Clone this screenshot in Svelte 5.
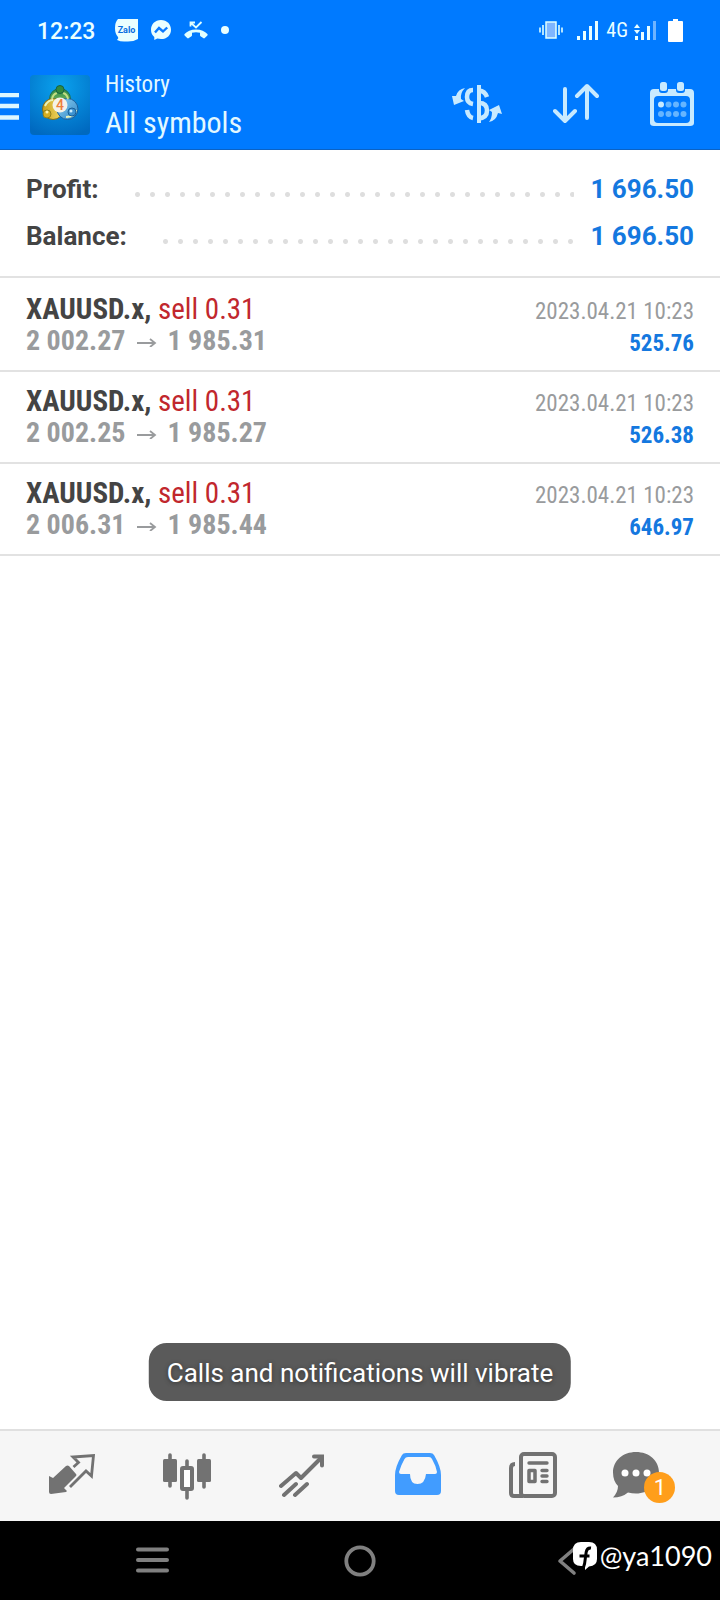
<script lang="ts">
	const summary = [
		{ label: 'Profit:', value: '1 696.50' },
		{ label: 'Balance:', value: '1 696.50' }
	];

	const deals = [
		{ open: '2 002.27', close: '1 985.31', profit: '525.76' },
		{ open: '2 002.25', close: '1 985.27', profit: '526.38' },
		{ open: '2 006.31', close: '1 985.44', profit: '646.97' }
	];

	let tab = 'history';
	let toast = 'Calls and notifications will vibrate';
</script>

<div class="screen">
	<div class="status-bar">
		<span class="clock">12:23</span>
		<svg class="zalo" width="23" height="23" viewBox="0 0 23 23">
			<path d="M3 0H23V20Q18 23 11 22.500Q6 23 2 21Q4 19 3 18Q0 15 0 9Q0 3 3 0Z" fill="#eaffff" />
			<text x="11.500" y="14" text-anchor="middle" class="zalo-text">Zalo</text>
		</svg>
		<svg class="messenger" width="20" height="21" viewBox="0 0 20 21">
			<path d="M10 0C4 0 0 4.300 0 9.700c0 3 1.200 5.600 3.300 7.300V20l3-1.400c1.200.3 2.400.5 3.700.5 6 0 10-4.100 10-9.400S16 0 10 0Z" fill="#eaffff" />
			<path d="M4 12.500 8 8l4 3.500 4.200-4" fill="none" stroke="#0a7aff" stroke-width="2.400" />
		</svg>
		<svg class="missed" width="24" height="18" viewBox="0 0 24 18">
			<path d="M12 8.500C7 8.500 3 10.500.6 13q-.6.800 0 1.600l2.600 2.500q.8.600 1.600 0l2.700-1.900q.6-.5.500-1.200V11.800q4-1.200 8 0V14q0 .7.500 1.200l2.700 1.900q.8.600 1.600 0l2.600-2.500q.6-.8 0-1.600C21 10.500 17 8.500 12 8.500Z" fill="#e0ffff" />
			<path d="M6.500 5.500V1.500H11M7 2l5 4.500 5.500-5.500" fill="none" stroke="#e0ffff" stroke-width="1.800" />
		</svg>
		<span class="dot"></span>

		<svg class="vibrate" width="24" height="18" viewBox="0 0 24 18">
			<rect x="7" y="1" width="10" height="16" fill="#7fb6ff" stroke="#e0ffff" stroke-width="1.500" />
			<path d="M1 6.500v5M4 4v10M20 4v10M23 6.500v5" stroke="#e0ffff" stroke-width="1.600" />
		</svg>
		<svg class="signal" width="22" height="20" viewBox="0 0 22 20">
			<path d="M0 16h3v4H0ZM6 11h3v9H6ZM12 6h3v14h-3ZM18 1h3v19h-3Z" fill="#eaffff" />
		</svg>
		<span class="network">4G</span>
		<svg class="signal" width="22" height="20" viewBox="0 0 22 20">
			<path d="M1 16h3v4H1ZM7 12h3v8H7ZM13 6h3v14h-3ZM0 8l3-4 3 4ZM0 10h6l-3 4Z" fill="#eaffff" />
			<path d="M19 1h3v19h-3Z" fill="#6fb4ff" />
		</svg>
		<svg class="battery" width="15" height="23" viewBox="0 0 15 23">
			<path d="M5 0h5v2h4q1 0 1 1v19q0 1-1 1H1q-1 0-1-1V3q0-1 1-1h4Z" fill="#fff" />
		</svg>
	</div>

	<header>
		<button class="menu" aria-label="Menu">
			<svg width="19" height="27" viewBox="0 0 19 27">
				<path d="M0 2h19M0 13h19M0 24.500h19" stroke="#dcf6ff" stroke-width="4.400" />
			</svg>
		</button>
		<svg class="app-icon" width="60" height="60" viewBox="0 0 60 60">
			<defs>
				<radialGradient id="tile" cx="50%" cy="20%" r="85%">
					<stop offset="0" stop-color="#0aa2ee" />
					<stop offset="1" stop-color="#0069c0" />
				</radialGradient>
				<linearGradient id="green" x2="0" y2="1">
					<stop offset="0" stop-color="#27894a" />
					<stop offset="1" stop-color="#9ccb62" />
				</linearGradient>
				<linearGradient id="gold" x2="1" y2="0">
					<stop offset="0" stop-color="#c9a21b" />
					<stop offset="1" stop-color="#f2dc6a" />
				</linearGradient>
				<linearGradient id="sky" x2="1" y2="1">
					<stop offset="0" stop-color="#91d1f2" />
					<stop offset="1" stop-color="#2d86c7" />
				</linearGradient>
			</defs>
			<rect width="60" height="60" rx="4" fill="url(#tile)" />
			<circle cx="30" cy="24" r="10.500" fill="url(#green)" stroke="#1f6d49" />
			<circle cx="23" cy="34" r="10.500" fill="url(#gold)" stroke="#786d24" />
			<circle cx="37.500" cy="34" r="10.500" fill="url(#sky)" stroke="#1b609c" />
			<path d="M22 24q1-5 5-6M38 24q-1-5-5-6" fill="none" stroke="#c3df83" stroke-width="2" />
			<path d="M15 31q3-6 8-6M36 42q9 0 10-7" fill="none" stroke="#e8f2ba" stroke-width="2" />
			<circle cx="30" cy="14.500" r="4" fill="#338b3d" stroke="#176144" />
			<circle cx="17" cy="39" r="4" fill="#d5ae22" stroke="#8f801e" />
			<circle cx="42" cy="37" r="4" fill="#3d92d1" stroke="#185f98" />
			<circle cx="41" cy="36" r="1.500" fill="#cdefff" />
			<circle cx="17" cy="37" r="1.500" fill="#fff4ad" />
			<circle cx="30" cy="30" r="7.500" fill="#f5f2e8" />
			<text x="30" y="35" text-anchor="middle" class="app-digit">4</text>
		</svg>
		<div class="titles">
			<span class="subtitle">History</span>
			<h1>All symbols</h1>
		</div>
		<div class="actions">
			<button aria-label="Symbols">
				<svg width="50" height="40" viewBox="0 0 50 40" fill="none" stroke="#c8eaff">
					<path d="M27 1v38" stroke-width="4" />
					<path d="M21 6q-6 0-6 7 0 6 6 7" stroke-width="4.500" />
					<path d="M15 26q1 7 6 8" stroke-width="4.500" />
					<path d="M27 6.500q6 .5 8 6.500M27 19q8 0 8 7.500 0 7-8 8" stroke-width="4.500" />
					<path d="M13 4Q6 5 4 12L0 12l2 9 10-4-3-2q-1-6 4-11ZM37 38q7-1 9-9l4 1-3-9-10 5 3 2q0 6-3 10Z" fill="#c8eaff" stroke="none" />
				</svg>
			</button>
			<button aria-label="Sort">
				<svg width="46" height="42" viewBox="0 0 46 42" fill="none" stroke="#c8eaff" stroke-width="4" stroke-linecap="round" stroke-linejoin="round">
					<path d="M12 6v32M2 28l10 10 10-10M34 35V4M24 13 34 3l10 10" />
				</svg>
			</button>
			<button aria-label="Period">
				<svg width="44" height="46" viewBox="0 0 44 46">
					<path fill-rule="evenodd" d="M4 8H9v1q0 3 3 3h3q3 0 3-3V8h8v1q0 3 3 3h3q3 0 3-3V8h5q4 0 4 4v30q0 3-4 3H4q-4 0-4-3V12Q0 8 4 8ZM8 15q-4 0-4 4v19q0 4 4 4h28q4 0 4-4V19q0-4-4-4Z" fill="#c8eaff" />
					<rect x="10" y="1" width="7" height="9" rx="2.500" fill="#c8eaff" />
					<rect x="27" y="1" width="7" height="9" rx="2.500" fill="#c8eaff" />
					<circle cx="11" cy="23.500" r="3" fill="#c8eaff" />
					<g fill="#66b5ff">
						<circle cx="18.500" cy="23.500" r="3" />
						<circle cx="26" cy="23.500" r="3" />
						<circle cx="33.500" cy="23.500" r="3" />
						<circle cx="11" cy="33" r="3" />
						<circle cx="18.500" cy="33" r="3" />
						<circle cx="26" cy="33" r="3" />
						<circle cx="33.500" cy="33" r="3" />
					</g>
				</svg>
			</button>
		</div>
	</header>

	<main>
		<dl class="summary">
			{#each summary as line}
				<div class="summary-line">
					<dt>{line.label}</dt>
					<span class="leader"></span>
					<dd>{line.value}</dd>
				</div>
			{/each}
		</dl>

		<ul class="deals">
			{#each deals as deal}
				<li>
					<div class="deal-info">
						<span class="symbol">XAUUSD.x, <span class="side">sell 0.31</span></span>
						<span class="prices">
							<span>{deal.open}</span>
							<svg width="20" height="12" viewBox="0 0 20 12">
								<path d="M0 8h18M13 4l5 4-5 4" fill="none" stroke="#999b9d" stroke-width="1.800" />
							</svg>
							<span>{deal.close}</span>
						</span>
					</div>
					<div class="deal-result">
						<time>2023.04.21 10:23</time>
						<span class="profit">{deal.profit}</span>
					</div>
				</li>
			{/each}
		</ul>

		{#if toast}
			<div class="toast" role="status">{toast}</div>
		{/if}
	</main>

	<nav class="tabs">
		<button aria-label="Quotes" on:click={() => (tab = 'quotes')}>
			<svg width="46" height="46" viewBox="0 0 46 46">
				<path d="M0 23l4 2L17 13q1.500-1 3 0l7 8q1 1 0 2L15 35l3 3-1 1-15 2q-2 0-2-2Z" fill="#727272" />
				<path d="M21 34 37 18l5.500 5L44.500 2.500 24 4l5.500 5.500L24.500 14" fill="none" stroke="#727272" stroke-width="2.800" />
			</svg>
		</button>
		<button aria-label="Chart" on:click={() => (tab = 'chart')}>
			<svg width="48" height="48" viewBox="0 0 48 48">
				<path d="M7 3v31M41 3v32M24 9v7M24 38v8" stroke="#727272" stroke-width="3.600" stroke-linecap="round" />
				<rect x="0" y="7" width="14" height="23" rx="1.500" fill="#727272" />
				<rect x="34" y="7" width="14" height="23" rx="1.500" fill="#727272" />
				<rect x="19" y="16" width="10" height="21" rx="1" fill="#fff" stroke="#727272" stroke-width="4" />
			</svg>
		</button>
		<button aria-label="Trade" on:click={() => (tab = 'trade')}>
			<svg width="46" height="46" viewBox="0 0 46 46" fill="none" stroke="#727272" stroke-width="4" stroke-linecap="round">
				<path d="M2 33 17 20l5 5L42 5M5 42l12-11M16 42l12-11" stroke-linejoin="round" />
				<path d="M35 3.500h8v9" />
			</svg>
		</button>
		<button aria-label="History" aria-current={tab === 'history'} on:click={() => (tab = 'history')}>
			<svg width="46" height="46" viewBox="0 0 46 46">
				<path d="M11 0H35q3 0 4 2Q46 14 46 22V38q0 4-4 4H4q-4 0-4-4V22Q0 14 7 2 8 0 11 0Z" fill="#419cff" />
				<path d="M13 4H34q2 0 3 2 4 7 5 13 0 2-2 2H31q-1 10-8.500 10T15 21H6q-2 0-2-2Q6 12 9.500 6q1-2 3.500-2Z" fill="#f7f7f7" />
			</svg>
		</button>
		<button aria-label="News" on:click={() => (tab = 'news')}>
			<svg width="48" height="48" viewBox="0 0 48 48" fill="none" stroke="#727272" stroke-width="4">
				<rect x="12" y="2" width="34" height="42" rx="3" />
				<path d="M6 12q-4 0-4 4V41q0 3 3 3H14" />
				<path d="M20 11h18M33 18.500h5M33 24h5M33 29.500h5" stroke-width="3.400" stroke-linecap="round" />
				<rect x="20" y="18.500" width="6" height="11" stroke-width="3.500" stroke-linejoin="round" />
			</svg>
		</button>
		<button aria-label="Messages" on:click={() => (tab = 'messages')}>
			<span class="bubble">
				<svg width="46" height="48" viewBox="0 0 46 48">
					<path d="M23 0C10 0 0 8.500 0 20.500c0 6 2 10.500 5 13.500q0 6-5 11.500 9 0 15-5 4 1 8 1c13 0 23-9 23-21S36 0 23 0Z" fill="#727272" />
					<circle cx="12" cy="21" r="3.500" fill="#fff" />
					<circle cx="23" cy="21" r="3.500" fill="#fff" />
					<circle cx="34" cy="21" r="3.500" fill="#fff" />
				</svg>
				<span class="badge">1</span>
			</span>
		</button>
	</nav>

	<div class="system-nav">
		<button aria-label="Recent apps">
			<svg width="33" height="27" viewBox="0 0 33 27">
				<path d="M2 2.500h29M2 13h29M2 23.500h29" stroke="#808080" stroke-width="4" stroke-linecap="round" />
			</svg>
		</button>
		<button aria-label="Home">
			<svg width="32" height="32" viewBox="0 0 32 32">
				<circle cx="16" cy="16" r="13.700" fill="none" stroke="#808080" stroke-width="3.800" />
			</svg>
		</button>
		<button aria-label="Back">
			<svg width="20" height="30" viewBox="0 0 20 30">
				<path d="M17 3 3 15l14 12" fill="none" stroke="#808080" stroke-width="3.600" stroke-linecap="round" stroke-linejoin="round" />
			</svg>
		</button>
		<div class="watermark">
			<svg width="24" height="28" viewBox="0 0 24 28">
				<path d="M8 0h8q8 0 8 8v9q0 7-8 7.500L12 28V24H8q-8 0-8-7V8Q0 0 8 0Z" fill="#fff" />
				<path d="M10 27q2-5 2.500-12L13.200 10q.8-4.500 4.800-4M6.500 14h10" fill="none" stroke="#000" stroke-width="3" />
			</svg>
			<span>@ya1090</span>
		</div>
	</div>
</div>

<style>
	:global(body) {
		margin: 0;
		background: #fff;
	}

	.screen {
		display: flex;
		flex-direction: column;
		min-height: 100vh;
		font-family: Roboto, 'Liberation Sans', sans-serif;
	}

	svg {
		display: block;
		flex: none;
	}

	button {
		display: flex;
		align-items: center;
		justify-content: center;
		padding: 0;
		border: none;
		background: none;
		cursor: pointer;
	}

	.status-bar {
		display: flex;
		align-items: center;
		height: 60px;
		padding: 0 37px;
		background: #007aff;
		color: #eaffff;
	}

	.clock {
		padding-top: 3px;
		font-size: 23px;
		font-weight: 500;
		line-height: 28px;
	}

	.zalo {
		margin-left: 20px;
	}

	.zalo-text {
		font-size: 9px;
		font-weight: 700;
		fill: #0a6ee0;
	}

	.messenger,
	.missed,
	.dot {
		margin-left: 13px;
	}

	.dot {
		width: 8px;
		height: 8px;
		border-radius: 50%;
		background: #eaffff;
	}

	.vibrate {
		margin-left: auto;
	}

	.signal {
		margin-left: 14px;
	}

	.network {
		margin-left: 7px;
		font-family: 'Roboto Condensed', Roboto, sans-serif;
		font-size: 20px;
	}

	.network + .signal {
		margin-left: 6px;
	}

	.battery {
		margin-left: 12px;
	}

	header {
		display: flex;
		align-items: center;
		height: 89px;
		border-bottom: 1px solid #0b62c4;
		background: #007aff;
		color: #e2f8ff;
	}

	.menu {
		padding-top: 4px;
	}

	.app-icon {
		margin-left: 11px;
	}

	.app-digit {
		font-size: 14px;
		font-weight: 500;
		fill: #ee7f3c;
	}

	.titles {
		display: flex;
		flex-direction: column;
		margin-left: 15px;
		font-family: 'Roboto Condensed', Roboto, sans-serif;
	}

	.subtitle {
		font-size: 23px;
		line-height: 36px;
	}

	h1 {
		margin: 0;
		font-size: 30px;
		font-weight: 400;
		line-height: 40px;
	}

	.actions {
		display: flex;
		align-items: center;
		gap: 51px;
		margin-left: auto;
		padding: 0 26px 2px 0;
	}

	main {
		position: relative;
		flex: 1;
	}

	.summary {
		margin: 0;
		padding: 16px 26px;
		border-bottom: 2px solid #e2e2e2;
		font-size: 26px;
		font-weight: 700;
		line-height: 47px;
	}

	.summary-line {
		display: flex;
	}

	dt {
		color: #444;
	}

	dd {
		margin: 0;
		color: #1478df;
	}

	.leader {
		flex: 1;
		margin: 26px 16px 16px 31px;
		background: radial-gradient(circle, #dedede 2px, transparent 3px) left center / 15px 5px repeat-x;
	}

	.deals {
		margin: 0;
		padding: 2px 0 0;
		list-style: none;
		font-family: 'Roboto Condensed', Roboto, sans-serif;
		line-height: 32px;
	}

	li {
		display: flex;
		justify-content: space-between;
		padding: 13px 26px 10px;
		border-bottom: 2px solid #e2e2e2;
	}

	.deal-info,
	.deal-result {
		display: flex;
		flex-direction: column;
	}

	.deal-info {
		font-size: 29px;
		font-weight: 700;
	}

	.symbol {
		color: #444;
	}

	.side {
		color: #c1272d;
		font-weight: 400;
	}

	.prices {
		display: flex;
		align-items: center;
		gap: 11px;
		color: #999b9d;
		font-size: 28px;
	}

	.deal-result {
		align-items: flex-end;
		padding-top: 3px;
		font-size: 23px;
	}

	time {
		color: #999b9d;
	}

	.profit {
		color: #1478df;
		font-weight: 700;
	}

	.toast {
		position: absolute;
		bottom: 28px;
		left: 50%;
		padding: 15px 18px 13px;
		border-radius: 18px;
		background: #5a5a5a;
		color: #fff;
		font-size: 26px;
		line-height: 30px;
		white-space: nowrap;
		text-shadow: 0 1px 4px #333;
		transform: translateX(-50%);
	}

	.tabs {
		display: grid;
		grid-template-columns: repeat(6, 1fr);
		height: 90px;
		padding: 0 14px;
		border-top: 2px solid #e0e0e0;
		background: #f6f6f6;
	}

	.bubble {
		position: relative;
		padding-right: 24px;
	}

	.badge {
		position: absolute;
		top: 20px;
		left: 31px;
		width: 31px;
		height: 31px;
		border-radius: 50%;
		background: #ff9e1b;
		color: #fff;
		font-family: Roboto, sans-serif;
		font-size: 22px;
		line-height: 32px;
	}

	.system-nav {
		position: relative;
		display: grid;
		grid-template-columns: repeat(3, 1fr);
		height: 79px;
		padding: 0 49px;
		background: #000;
	}

	.watermark {
		position: absolute;
		top: 16px;
		right: 8px;
		display: flex;
		align-items: center;
		gap: 3px;
		color: #fff;
		font-family: Lato, sans-serif;
		font-size: 27px;
		line-height: 38px;
	}
</style>
